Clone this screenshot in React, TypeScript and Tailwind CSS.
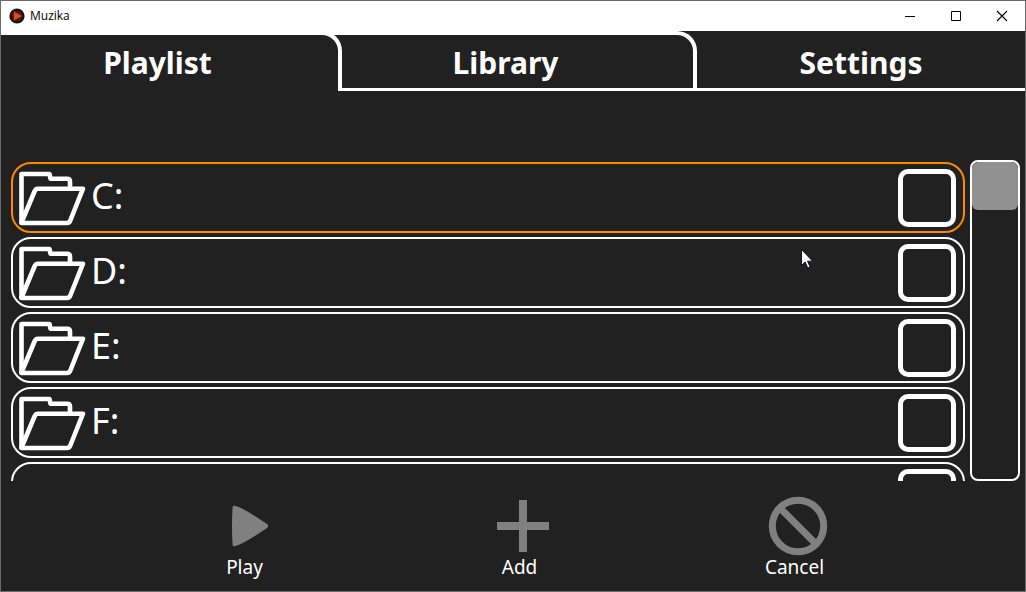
import { useState } from "react";

const drives = ["C:", "D:", "E:", "F:", ""];

function AppLogo() {
  return (
    <svg viewBox="0 0 16 16" className="size-4" aria-hidden="true">
      <circle cx="8" cy="8" r="7.6" fill="#150c14" />
      <circle cx="8" cy="8" r="5.6" fill="#4a1418" />
      <path d="M4.8 3.4 13 8 4.8 12.4Z" fill="#e4480f" />
    </svg>
  );
}

function FolderIcon() {
  return (
    <svg viewBox="0 0 68 56" className="h-14 w-[68px] shrink-0" fill="none" stroke="#fff" strokeWidth="4.6" strokeLinejoin="round" strokeLinecap="round" aria-hidden="true">
      <path d="M2.5 52.500V4H30.500L31.500 8.700H48Q51 8.700 51 11.500V18" />
      <path d="M2.500 52.500 15.500 21.500Q16.500 18.700 19 18.700H64L51.500 50Q50.500 53 48 53H2.500Z" />
    </svg>
  );
}

function PlayIcon() {
  return (
    <svg viewBox="0 0 60 60" className="size-[60px]" aria-hidden="true">
      <path d="M16.500 9.800Q24 11 49 28Q51.500 30 49 32Q24 49 16.500 50.200Q14.800 50.500 14.600 49Q13.400 30 14.600 11Q14.800 9.500 16.500 9.800Z" fill="#808080" />
    </svg>
  );
}

function AddIcon() {
  return (
    <svg viewBox="0 0 60 60" className="size-[60px]" aria-hidden="true">
      <path d="M26 4h8v22h22v8H34v22h-8V34H4v-8h22Z" fill="#808080" />
    </svg>
  );
}

function CancelIcon() {
  return (
    <svg viewBox="0 0 60 60" className="size-[60px]" fill="none" stroke="#808080" strokeWidth="7" aria-hidden="true">
      <circle cx="30" cy="30" r="25.700" />
      <path d="M12 12 48 48" />
    </svg>
  );
}

const actions = [
  { name: "Play", Icon: PlayIcon },
  { name: "Add", Icon: AddIcon },
  { name: "Cancel", Icon: CancelIcon },
];

function TitleBar() {
  return (
    <header className="flex h-[30px] shrink-0 items-center bg-white text-black">
      <div className="flex flex-1 items-center gap-[5px] pl-2">
        <AppLogo />
        <h1 className="font-['Open_Sans',sans-serif] text-xs">Muzika</h1>
      </div>
      <button aria-label="Minimize" className="grid h-full w-[46px] place-items-center">
        <svg viewBox="0 0 12 12" className="size-3" aria-hidden="true"><path d="M1 6h10v1H1Z" /></svg>
      </button>
      <button aria-label="Maximize" className="grid h-full w-[46px] place-items-center">
        <svg viewBox="0 0 12 12" className="size-3" fill="none" stroke="#000" aria-hidden="true"><path d="M1.500 1.500h9v9h-9Z" /></svg>
      </button>
      <button aria-label="Close" className="grid h-full w-[46px] place-items-center">
        <svg viewBox="0 0 12 12" className="size-3" fill="none" stroke="#000" strokeWidth="1.100" aria-hidden="true"><path d="m1 1 10 10M11 1 1 11" /></svg>
      </button>
    </header>
  );
}

function Tabs() {
  return (
    <nav aria-label="Sections" className="grid h-[60px] shrink-0 grid-cols-[341fr_355fr_328fr] text-3xl font-bold">
      <button aria-current="page" className="z-10 rounded-tr-[20px] border-t-4 border-r-4 border-white bg-[#212121] pr-6">Playlist</button>
      <button className="-ml-5 rounded-tr-[20px] border-t-4 border-r-4 border-b-3 border-white pt-0.5 pr-5 pl-4">Library</button>
      <button className="border-b-3 border-white pt-1.5">Settings</button>
    </nav>
  );
}

function DriveRow({ name, selected }: { name: string; selected: boolean }) {
  return (
    <li
      className={`flex h-[71px] shrink-0 items-center justify-end rounded-[20px] border-2 pr-[7px] pl-1.5 ${selected ? "border-[#ff8800]" : "border-white"}`}
    >
      {name && (
        <label htmlFor={`drive-${name}`} className="flex flex-1 items-center gap-1">
          <FolderIcon />
          <span className="pb-1 text-4xl">{name}</span>
        </label>
      )}
      <input
        id={`drive-${name}`}
        type="checkbox"
        aria-label={name || "Drive"}
        className="size-[58px] appearance-none rounded-[10px] border-[5px] border-white checked:bg-[#808080]"
      />
    </li>
  );
}

export default function App() {
  const [selected] = useState("C:");
  return (
    <div className="relative flex h-screen flex-col border border-[#6b6b6b] bg-[#212121] font-['Noto_Sans',sans-serif] text-white">
      <TitleBar />
      <Tabs />
      <main className="mt-[69px] flex min-h-0 flex-1 gap-[5px] pr-[5px] pl-2.5">
        <ul id="drives" className="flex min-w-0 flex-1 flex-col gap-1 overflow-hidden pt-0.5">
          {drives.map((name) => (
            <DriveRow key={name} name={name} selected={name === selected} />
          ))}
        </ul>
        <div role="scrollbar" aria-label="Drives" aria-controls="drives" aria-valuenow={0} className="w-[50px] overflow-hidden rounded-lg border-2 border-white">
          <div className="h-12 rounded-md bg-[#919191]" />
        </div>
      </main>
      <footer className="grid h-[110px] shrink-0 grid-cols-3 pt-[15px] pr-[93px] pl-[106px]">
        {actions.map(({ name, Icon }) => (
          <button key={name} className="flex flex-col items-center text-[19px] leading-6">
            <span className="pl-1.5"><Icon /></span>
            <span className="-mt-px">{name}</span>
          </button>
        ))}
      </footer>
      <svg viewBox="0 0 12 20" className="pointer-events-none absolute top-[248px] left-[800px] h-5 w-3" aria-hidden="true">
        <path d="M.5.5v16l3.700-3.500 2.500 6 2.400-1-2.500-5.800h5Z" fill="#fff" stroke="#10101c" />
      </svg>
    </div>
  );
}
